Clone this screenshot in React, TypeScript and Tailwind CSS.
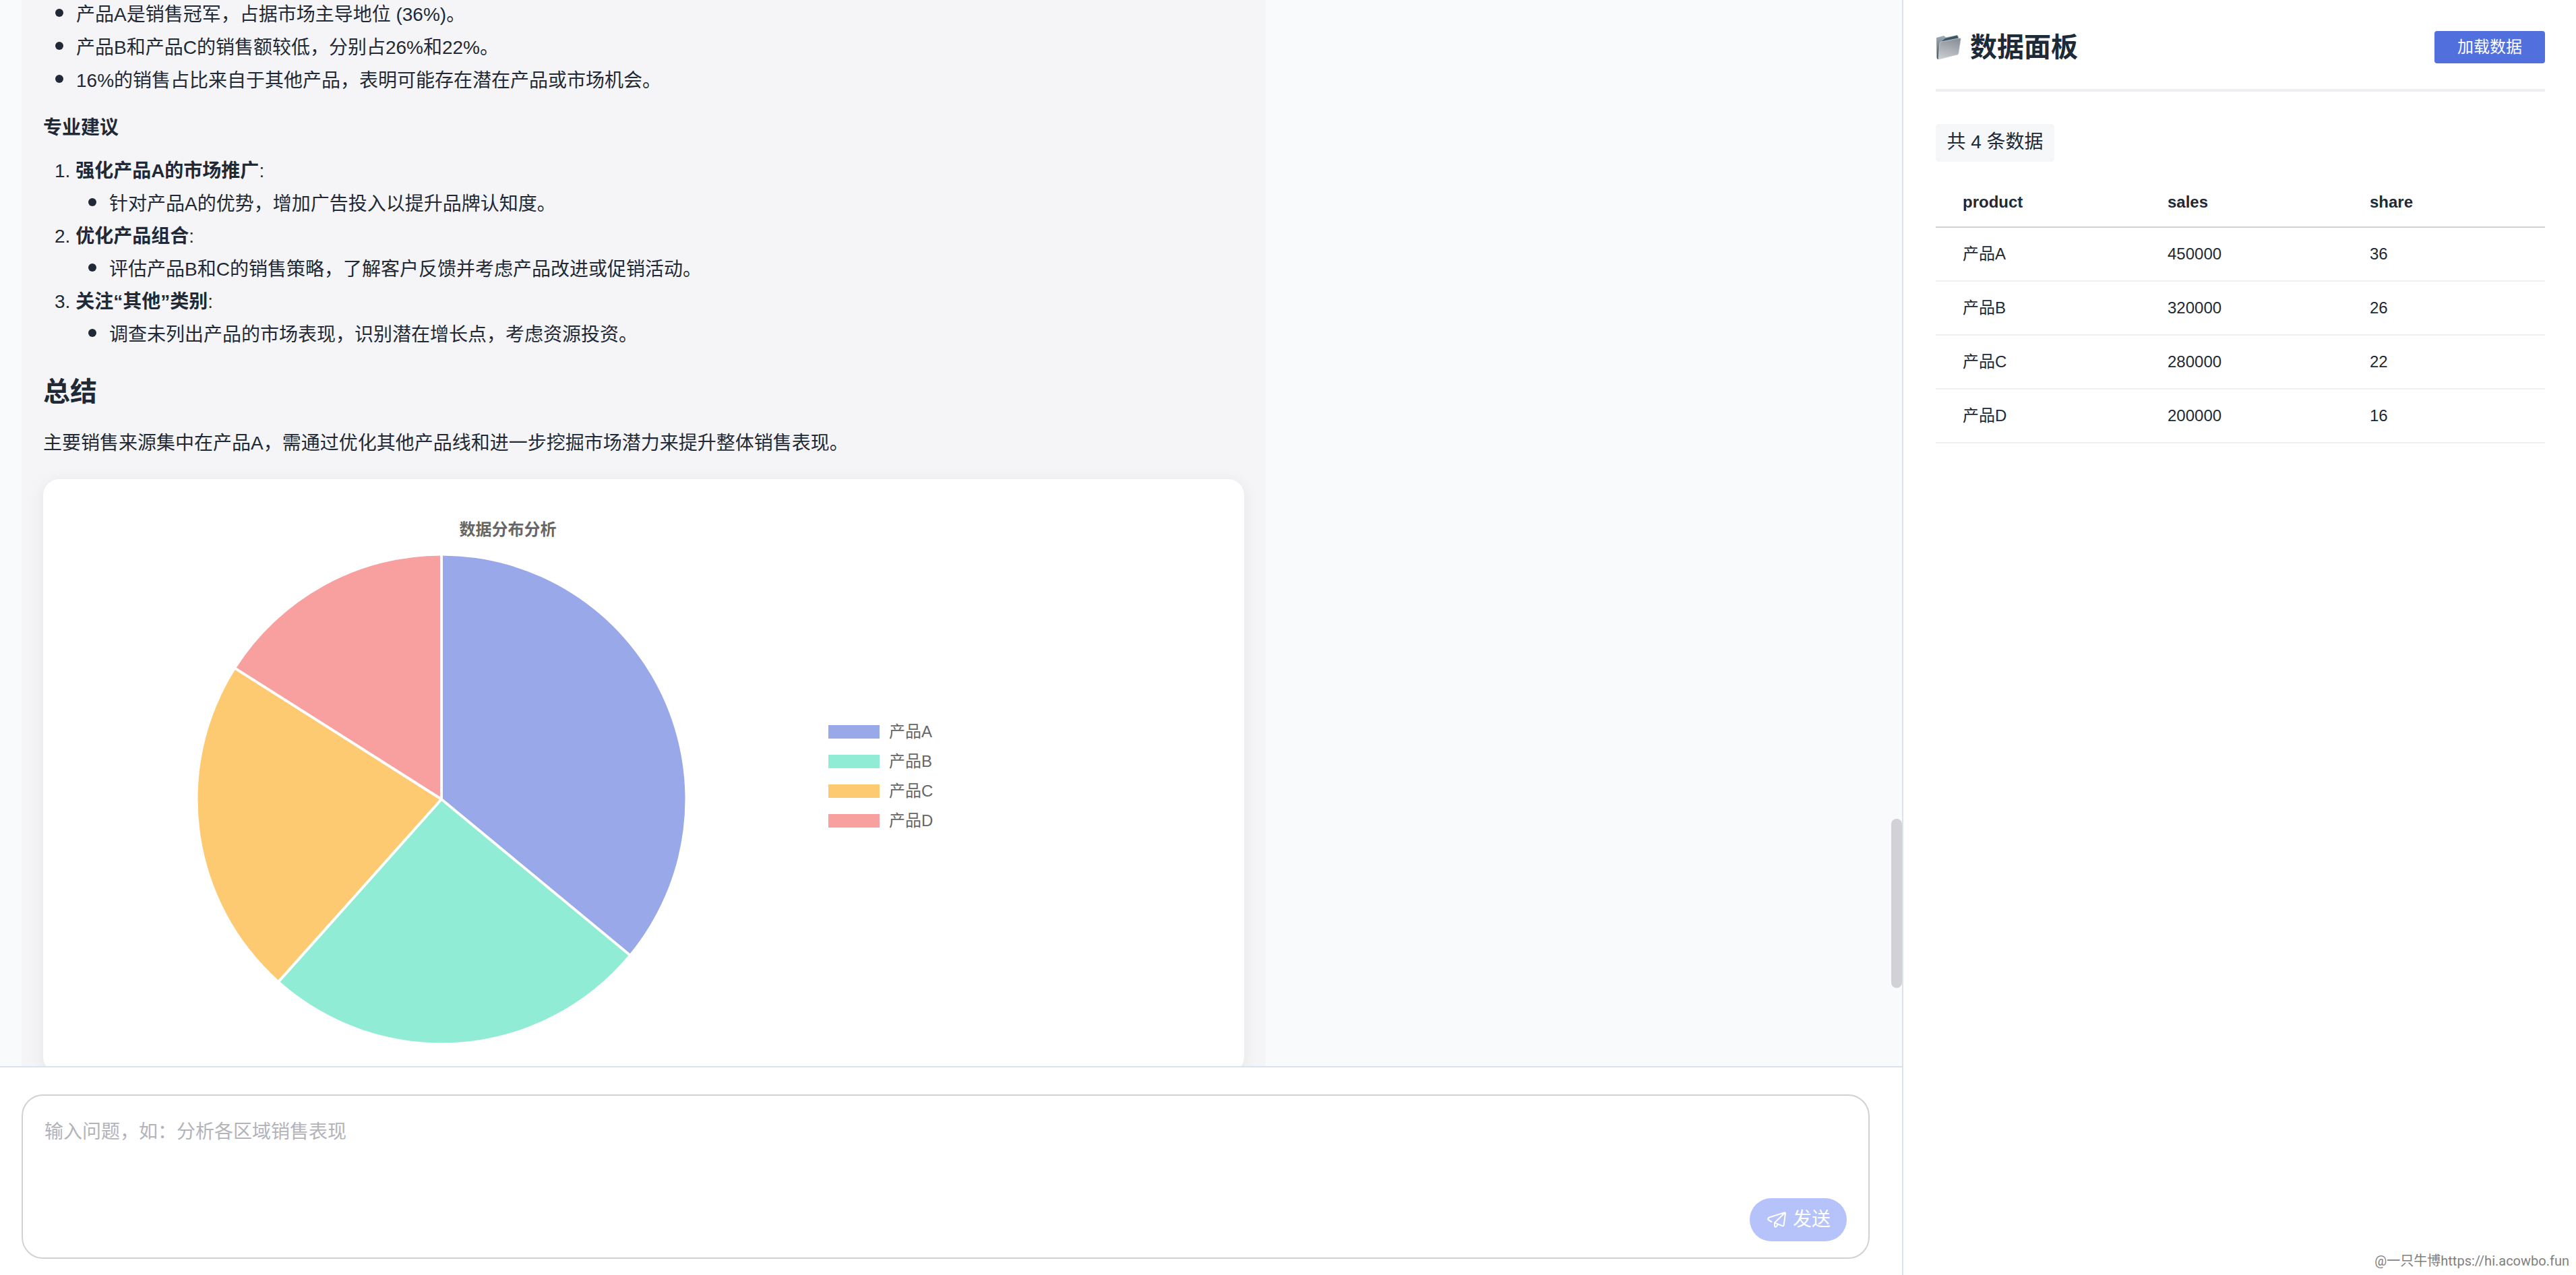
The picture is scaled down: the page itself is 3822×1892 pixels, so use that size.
import React, { useState } from "react";

const rows = [
  { product: "产品A", sales: 450000, share: 36, color: "#99a8e9" },
  { product: "产品B", sales: 320000, share: 26, color: "#90ecd4" },
  { product: "产品C", sales: 280000, share: 22, color: "#fdc971" },
  { product: "产品D", sales: 200000, share: 16, color: "#f8a0a0" },
];

const findings = [
  "产品A是销售冠军，占据市场主导地位 (36%)。",
  "产品B和产品C的销售额较低，分别占26%和22%。",
  "16%的销售占比来自于其他产品，表明可能存在潜在产品或市场机会。",
];

const suggestions = [
  { title: "强化产品A的市场推广", text: "针对产品A的优势，增加广告投入以提升品牌认知度。" },
  { title: "优化产品组合", text: "评估产品B和C的销售策略，了解客户反馈并考虑产品改进或促销活动。" },
  { title: "关注“其他”类别", text: "调查未列出产品的市场表现，识别潜在增长点，考虑资源投资。" },
];

const PieChart = () => {
  const radius = 361.5;
  const total = rows.reduce((sum, r) => sum + r.sales, 0);
  const point = (value: number) => {
    const angle = (value / total) * Math.PI * 2;
    return [radius * Math.sin(angle), -radius * Math.cos(angle)];
  };

  let start = 0;
  const slices = rows.map((r) => {
    const [x1, y1] = point(start);
    start += r.sales;
    const [x2, y2] = point(start);
    return { color: r.color, x1, y1, d: `M0 0L${x1} ${y1}A${radius} ${radius} 0 0 1 ${x2} ${y2}Z` };
  });

  return (
    <svg className="w-[728px] h-[728px]" viewBox="-364 -364 728 728">
      {slices.map((s) => (
        <path key={s.color} d={s.d} fill={s.color} />
      ))}
      {slices.map((s) => (
        <line key={s.color} x1="0" y1="0" x2={s.x1 * 1.01} y2={s.y1 * 1.01} stroke="#fff" strokeWidth="4" />
      ))}
    </svg>
  );
};

const FolderIcon = () => (
  <svg className="w-[38px] h-[38px]" viewBox="0 0 38 38">
    <defs>
      <linearGradient id="back" x1="0" y1="0" x2="0" y2="1">
        <stop offset="0" stopColor="#9fb0ba" />
        <stop offset="1" stopColor="#46525b" />
      </linearGradient>
      <linearGradient id="front" x1="0.6" y1="0" x2="0.3" y2="1">
        <stop offset="0" stopColor="#8a9199" />
        <stop offset="0.5" stopColor="#a9aeb5" />
        <stop offset="1" stopColor="#c9ccd0" />
      </linearGradient>
    </defs>
    <path d="M1 5L12 2L15 4.500L32 1L34 4L33 30L3 37Q1.500 36 1.500 34Z" fill="url(#back)" />
    <path d="M14 6L32 1.500L33.500 6L8 11Z" fill="#3f5462" />
    <path d="M8 11L36 5.500Q37.500 5.500 37.300 7L34 28Q33.800 29.500 32 30L5 37Q3.500 37 4 35L6 13Q6.200 11.500 8 11Z" fill="url(#front)" stroke="#d5dade" strokeWidth="0.7" />
  </svg>
);

const SendIcon = () => (
  <svg className="w-7 h-6" viewBox="0 0 28 24" fill="none" stroke="currentColor" strokeWidth="2" strokeLinecap="round" strokeLinejoin="round">
    <path d="M6.500 15L2.500 12.800Q-0.300 10.500 3 8.500L25.500 1.400Q27.200 1 27 2.700L24.600 20Q24.200 21.700 22.500 21.200L11 16.400L26.200 1.800" />
    <path d="M11 16.400V21.500Q11.600 23.600 13.500 22.200L15.800 18.800" />
  </svg>
);

const Bullet = () => <span className="w-3 h-3 shrink-0 rounded-full bg-[#212936] mr-[19px] -translate-y-[3px]" />;

const Answer = () => (
  <div className="ml-8 w-[1846px] h-[1640px] bg-[#f5f5f7] pl-8 pr-8 text-[28px] text-[#212936]">
    <ul className="-translate-y-[3px] h-[147px]">
      {findings.map((f) => (
        <li key={f} className="flex items-center h-[49px] pl-[18px] leading-[49px]">
          <Bullet />
          {f}
        </li>
      ))}
    </ul>
    <h4 className="mt-[18px] h-[49px] leading-[49px] font-bold">专业建议</h4>
    <ol className="mt-4">
      {suggestions.map((s, i) => (
        <li key={s.title} className="h-[97px]">
          <div className="h-[48.500px] leading-[48.500px] pl-[17px]">
            {i + 1}. <strong>{s.title}</strong>:
          </div>
          <div className="flex items-center h-[48.500px] leading-[48.500px] pl-[67px]">
            <Bullet />
            {s.text}
          </div>
        </li>
      ))}
    </ol>
    <h2 className="mt-[32px] h-[56px] leading-[56px] text-[40px] font-bold">总结</h2>
    <p className="mt-[24px] h-[49px] leading-[49px]">主要销售来源集中在产品A，需通过优化其他产品线和进一步挖掘市场潜力来提升整体销售表现。</p>

    <div className="mt-[29px] w-[1782px] h-[881px] rounded-3xl bg-white shadow-[0_4px_24px_rgba(0,0,0,0.07)] pt-[58px]">
      <div className="w-[1379px] h-[34px] text-center text-2xl leading-[34px] font-bold text-[#666]">数据分布分析</div>
      <div className="flex items-center pl-[227px] mt-[19px]">
        <PieChart />
        <div className="flex flex-col gap-y-[14px] ml-[210px] -mt-[68px] text-2xl text-[#666]">
          {rows.map((r) => (
            <div key={r.product} className="flex items-center h-[30px] leading-[30px]">
              <span className="w-[76px] h-5 mr-[14px]" style={{ backgroundColor: r.color }} />
              {r.product}
            </div>
          ))}
        </div>
      </div>
    </div>
  </div>
);

const Composer = () => {
  const [question, setQuestion] = useState("");

  return (
    <div className="h-[310px] shrink-0 border-t-2 border-[#dce2ea] bg-white pt-10 pl-8">
      <div className="relative w-[2742px] h-[244px] rounded-[32px] border-2 border-[#d1d1d6] bg-white">
        <textarea
          value={question}
          onChange={(e) => setQuestion(e.target.value)}
          placeholder="输入问题，如：分析各区域销售表现"
          className="block w-full h-full resize-none bg-transparent pl-8 pt-[30px] text-[28px] leading-[48px] outline-none placeholder:text-[#b3b3ba]"
        />
        <button className="absolute right-8 bottom-6 flex items-center w-36 h-16 rounded-full bg-[#b5c3fa] pl-[26px] text-[28px] text-white">
          <SendIcon />
          <span className="ml-[10px]">发送</span>
        </button>
      </div>
    </div>
  );
};

const DataPanel = () => (
  <aside className="relative w-[1000px] h-full shrink-0 border-l-2 border-[#dce2ea] bg-white pl-12 pr-[46px] pt-[46px]">
    <div className="flex items-start h-[90px] border-b-4 border-[#edeef2]">
      <div className="flex items-center h-12">
        <FolderIcon />
        <h2 className="ml-[13px] text-[40px] leading-[48px] font-bold text-[#1d2a38]">数据面板</h2>
      </div>
      <button className="ml-auto w-[164px] h-12 rounded bg-[#5170de] text-2xl text-white">加载数据</button>
    </div>
    <div className="mt-12 w-[176px] h-14 rounded bg-[#f5f7f9] text-center text-[28px] leading-[53px] text-[#212936]">共 4 条数据</div>

    <div className="mt-6 text-2xl text-[#212936]">
      <div className="grid grid-cols-[304px_300px_1fr] items-center h-[74px] pl-10 border-b-2 border-[#d1d1d6] font-bold">
        <span>product</span>
        <span>sales</span>
        <span>share</span>
      </div>
      {rows.map((r) => (
        <div key={r.product} className="grid grid-cols-[304px_300px_1fr] items-center h-20 pl-10 pb-px border-b-2 border-[#efeff0]">
          <span>{r.product}</span>
          <span>{r.sales}</span>
          <span>{r.share}</span>
        </div>
      ))}
    </div>

    <div className="absolute right-[10px] bottom-[7px] font-['Roboto','Noto_Sans_CJK_SC',sans-serif] text-[20px] leading-7 text-[#808080]">
      @一只牛博https://hi.acowbo.fun
    </div>
  </aside>
);

const App = () => {
  return (
    <div className="flex w-[3822px] h-[1892px] overflow-hidden font-['Liberation_Sans','Noto_Sans_CJK_SC',sans-serif]">
      <main className="flex flex-col flex-1 min-w-0">
        <div className="relative flex-1 min-h-0 overflow-hidden bg-[#f9fafc]">
          <Answer />
          <div className="absolute right-0 top-[1215px] w-4 h-[251px] rounded-full bg-[#d1d1d6]" />
        </div>
        <Composer />
      </main>
      <DataPanel />
    </div>
  );
};

export default App;
